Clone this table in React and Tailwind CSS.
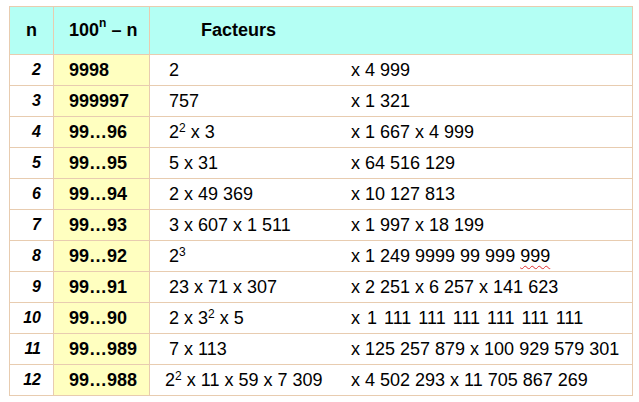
import React from "react";

const rows = [
  { n: "2", v: "9998", a: <>2</>, b: "x 4 999" },
  { n: "3", v: "999997", a: <>757</>, b: "x 1 321" },
  { n: "4", v: "99…96", a: <>2<sup className="text-[12px]">2</sup> x 3</>, b: "x 1 667 x 4 999" },
  { n: "5", v: "99…95", a: <>5 x 31</>, b: "x 64 516 129" },
  { n: "6", v: "99…94", a: <>2 x 49 369</>, b: "x 10 127 813" },
  { n: "7", v: "99…93", a: <>3 x 607 x 1 511</>, b: "x 1 997 x 18 199" },
  {
    n: "8",
    v: "99…92",
    a: <>2<sup className="text-[12px]">3</sup></>,
    b: (
      <>
        x 1 249 9999 99 999{" "}
        <span className="underline decoration-wavy decoration-[#e03030] decoration-1 underline-offset-[3px]">999</span>
      </>
    ),
  },
  { n: "9", v: "99…91", a: <>23 x 71 x 307</>, b: "x 2 251 x 6 257 x 141 623" },
  { n: "10", v: "99…90", a: <>2 x 3<sup className="text-[12px]">2</sup> x 5</>, b: "x 1 111 111 111 111 111 111", wide: true },
  { n: "11", v: "99…989", a: <>7 x 113</>, b: "x 125 257 879 x 100 929 579 301" },
  { n: "12", v: "99…988", a: <>2<sup className="text-[12px]">2</sup> x 11 x 59 x 7 309</>, b: "x 4 502 293 x 11 705 867 269", shift: true },
];

const App = () => {
  return (
    <div className="w-[639px] h-[402px] bg-white pt-[6px] pl-[9px] text-black" style={{ fontFamily: '"Liberation Sans", Arial, sans-serif' }}>
      <div className="w-[624px] border border-[#e8ccb0]">
        {/* header */}
        <div className="grid grid-cols-[44px_96px_1fr] h-[48px] bg-[#b4fff4] border-b border-[#e8ccb0] font-bold text-[18px]">
          <div className="flex items-center justify-center border-r border-[#e8ccb0]">n</div>
          <div className="flex items-center pl-[15px] border-r border-[#e8ccb0]">
            100<sup className="text-[12px] -top-[0.6em]">n</sup>&nbsp;– n
          </div>
          <div className="flex items-center pl-[51px]">Facteurs</div>
        </div>

        {rows.map((r, i) => (
          <div
            key={r.n}
            className={
              "grid grid-cols-[44px_96px_192px_1fr] text-[18px] " +
              (i === rows.length - 1 ? "h-[30px]" : "h-[31px] border-b border-[#e8ccb0]")
            }
          >
            <div className="flex items-center justify-end pr-[12px] text-[16px] font-bold italic border-r border-[#e8ccb0]">
              {r.n}
            </div>
            <div className="flex items-center pl-[15px] font-bold bg-[#ffffc0] border-r border-[#e8ccb0]">
              {r.v}
            </div>
            <div className={"flex items-center whitespace-nowrap " + (r.shift ? "pl-[15px]" : "pl-[19px]")}>
              <span>{r.a}</span>
            </div>
            <div className="flex items-center pl-[9px] whitespace-nowrap">
              <span className={r.wide ? "[word-spacing:2px]" : ""}>{r.b}</span>
            </div>
          </div>
        ))}
      </div>
    </div>
  );
};

export default App;
